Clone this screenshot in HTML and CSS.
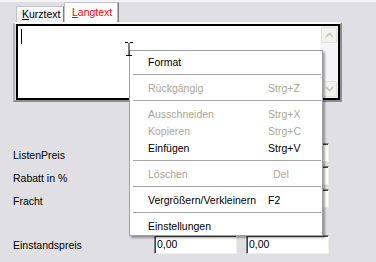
FILE: index.html
```html
<!DOCTYPE html>
<html lang="de">
<head>
<meta charset="UTF-8">
<link rel="stylesheet" href="styles.css">
</head>
<body>
  <div class="window">
    <!-- Tab strip -->
    <div class="tabs">
      <div class="tab kurz"><u>K</u>urztext</div>
      <div class="tab lang active"><u>L</u>angtext</div>
    </div>

    <div class="sheet">
      <div class="memo">
        <span class="caret"></span>
        <div class="scrollbar">
          <div class="sb-btn">
            <svg width="9" height="6" viewBox="0 0 9 6"><path d="M1 5 L4.5 1.5 L8 5" fill="none" stroke="#c8c8c0" stroke-width="1.6"/></svg>
          </div>
          <div class="sb-btn">
            <svg width="9" height="6" viewBox="0 0 9 6"><path d="M1 1 L4.5 4.5 L8 1" fill="none" stroke="#c8c8c0" stroke-width="1.6"/></svg>
          </div>
        </div>
      </div>
    </div>

    <!-- Price form -->
    <div class="form">
      <div class="label">ListenPreis</div>
      <div class="field"></div>
      <div class="field"></div>

      <div class="label">Rabatt in %</div>
      <div class="field"></div>
      <div class="field"></div>

      <div class="label">Fracht</div>
      <div class="field"></div>
      <div class="field"></div>

      <div class="label"></div>
      <div></div>
      <div></div>

      <div class="label last">Einstandspreis</div>
      <div class="field">0,00</div>
      <div class="field">0,00</div>
    </div>
  </div>

  <!-- Context menu over the memo -->
  <div class="context-menu">
    <div class="mi"><span class="txt">Format</span></div>
    <div class="sep"></div>
    <div class="mi off"><span class="txt">Rückgängig</span><span>Strg+Z</span></div>
    <div class="sep"></div>
    <div class="mi off"><span class="txt">Ausschneiden</span><span>Strg+X</span></div>
    <div class="mi off"><span class="txt">Kopieren</span><span>Strg+C</span></div>
    <div class="mi"><span class="txt">Einfügen</span><span>Strg+V</span></div>
    <div class="sep"></div>
    <div class="mi off"><span class="txt">Löschen</span><span class="del">Del</span></div>
    <div class="sep"></div>
    <div class="mi"><span class="txt">Vergrößern/Verkleinern</span><span>F2</span></div>
    <div class="sep"></div>
    <div class="mi"><span class="txt">Einstellungen</span></div>
  </div>

  <svg class="ibeam" width="10" height="18" viewBox="0 0 10 18">
    <path d="M1 2.5 H4 M6 2.5 H9 M5 3 V15 M2 15.5 H8" fill="none" stroke="#000" stroke-width="1"/>
  </svg>
</body>
</html>
```

FILE: styles.css
```css
body {
  margin: 0;
  width: 376px;
  height: 262px;
  overflow: hidden;
  position: relative;
  background: #e0dfe3;
  font-family: "Liberation Sans", Arial, sans-serif;
  font-size: 10.5px;
  color: #000;
}

.window {
  border-top: 2px solid #f4f4f6;
}

/* tabs */
.tabs {
  display: flex;
  align-items: flex-end;
  height: 20px;
  padding-left: 16px;
}
.tab {
  box-sizing: border-box;
  height: 16px;
  border: 1px solid #c2c2c8;
  border-bottom: 0;
  border-right-color: #808080;
  background: linear-gradient(#fafafb, #efeff1);
  line-height: 14px;
  white-space: nowrap;
}
.tab.kurz {
  width: 48px;
  padding-left: 5px;
}
.tab.lang {
  width: 55px;
  padding-left: 7px;
}
.tab.active {
  height: 20px;
  padding-top: 2px;
  color: #ff0000;
  background: #fcfcfd;
  box-shadow: inset -1px 0 #b4b4b8;
}

/* memo panel */
.sheet {
  box-sizing: border-box;
  width: 329px;
  height: 80px;
  margin-left: 13px;
  padding-left: 1px;
  border: 2px solid;
  border-color: #fff #8c8c8c #8c8c8c #b4b4b8;
}
.memo {
  box-sizing: border-box;
  height: 76px;
  border: 2px solid #000;
  background: #fff;
  display: flex;
  justify-content: space-between;
}
.caret {
  width: 1px;
  height: 15px;
  margin: 3px 0 0 3px;
  background: #000;
}
.scrollbar {
  box-sizing: border-box;
  width: 17px;
  padding: 1px 1px 1px 0;
  background: #f5f5f7;
  display: flex;
  flex-direction: column;
  justify-content: space-between;
}
.sb-btn {
  box-sizing: border-box;
  height: 16px;
  border: 1px solid #e2e2da;
  border-radius: 2px;
  background: #f3f3ee;
  display: flex;
  align-items: center;
  justify-content: center;
}

/* form rows */
.form {
  display: grid;
  grid-template-columns: 132px 83px 83px;
  grid-template-rows: repeat(5, 19px);
  column-gap: 9px;
  row-gap: 4px;
  margin: 41px 0 0 13px;
}
.label {
  padding-top: 3px;
  line-height: 19px;
  white-space: nowrap;
}
.label.last {
  padding-top: 1px;
}
.field {
  box-sizing: border-box;
  height: 19px;
  padding-left: 2px;
  line-height: 17px;
  background: #fff;
  border: 1px solid;
  border-color: #808080 #f1efe2 #f1efe2 #808080;
  box-shadow: inset 1px 1px #404040, inset -1px -1px #fff;
}

/* context menu */
.context-menu {
  position: absolute;
  left: 129px;
  top: 50px;
  width: 194px;
  box-sizing: border-box;
  padding: 2px 0 1px;
  background: #fff;
  border: 1px solid #a0a0a0;
  box-shadow: 2px 2px 2px rgba(0, 0, 0, 0.35);
  z-index: 5;
}
.mi {
  display: flex;
  align-items: center;
  height: 17px;
  padding-left: 18px;
  white-space: nowrap;
}
.mi .txt {
  width: 120px;
}
.mi.off {
  color: #aca899;
}
.mi .del {
  margin-left: 5px;
}
.sep {
  height: 1px;
  margin: 4px 1px 4px 3px;
  background: #a6a6a6;
}

.ibeam {
  position: absolute;
  left: 124px;
  top: 40px;
  z-index: 10;
}
```
